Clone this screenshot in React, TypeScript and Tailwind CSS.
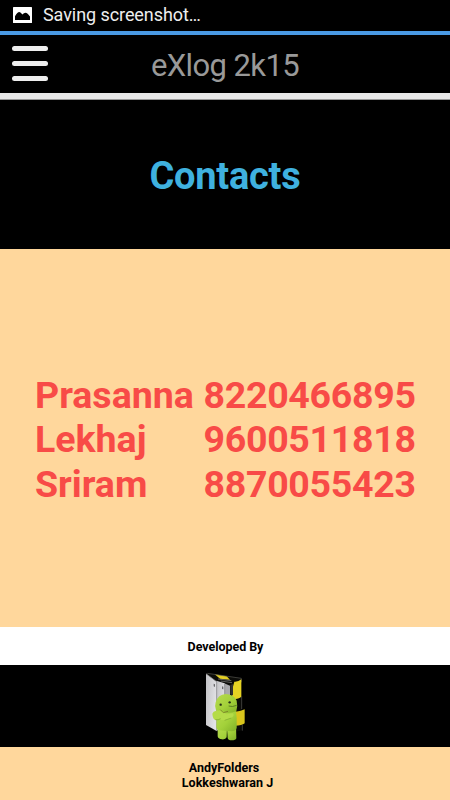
import React from "react";

type Contact = {
  name: string;
  phone: string;
};

const contacts: Contact[] = [
  { name: "Prasanna", phone: "8220466895" },
  { name: "Lekhaj", phone: "9600511818" },
  { name: "Sriram", phone: "8870055423" },
];

const PictureIcon: React.FC = () => (
  <svg className="w-[19px] h-4" viewBox="0 0 19 16">
    <rect width="19" height="16" rx="0.6" fill="#fff" />
    <path d="M2 12.9V9.2Q4.5 5 6.3 5q1.6 0 3 2.6Q11 5.8 12.5 5.8q2 0 4.5 3.8v3.3z" fill="#000" />
  </svg>
);

const FolderLogo: React.FC = () => (
  <svg className="w-[40px] h-[70px]" viewBox="45 35 120 210">
    <defs>
      <linearGradient id="paper" x1="0" x2="1" y1="0" y2="0.4">
        <stop offset="0" stopColor="#c2c2c5" />
        <stop offset="1" stopColor="#e2e2e6" />
      </linearGradient>
      <linearGradient id="body" x1="0" x2="1" y1="0" y2="1">
        <stop offset="0" stopColor="#b9dc50" />
        <stop offset="0.55" stopColor="#a3d13a" />
        <stop offset="1" stopColor="#80b028" />
      </linearGradient>
    </defs>
    {/* striped back cover */}
    <path d="M48 39l106 16 2 155-36 8-50-6z" fill="#0b0b08" />
    <path d="M74 42l36 6 10 10-30-3z" fill="#e3cf22" />
    <path d="M52 39l102 15v12" fill="none" stroke="#5c5c55" strokeWidth="2" />
    <path d="M84 56l40 5M92 62l34 5" fill="none" stroke="#8a8a86" strokeWidth="2" />
    <path d="M127 86l6-22q12 1 21-7v52q-8 8-28 7z" fill="#e6d323" />
    <path d="M135 153q14 2 29-6v42q-8 7-29 7z" fill="#d9c51c" />
    <path d="M155 108v38M157 193v18" fill="none" stroke="#5a5a55" strokeWidth="2" />
    <path d="M121 74l8-3v34l-8-3z" fill="#303030" />
    {/* paper sheets */}
    <path d="M101 68l19 8v125l-19 8z" fill="#a9a9ad" />
    <path d="M79 61l25 8 2 134-27 8z" fill="url(#paper)" />
    <path d="M104 69v120" stroke="#77777a" strokeWidth="2" />
    <path d="M48 40l32 24v148l-32-18z" fill="url(#paper)" />
    <path d="M48 40l32 24v148" fill="none" stroke="#88888b" strokeWidth="2" />
    <path d="M71 70l4 2v8l-4-2zM96 78l4 1v8l-4-1z" fill="#6a6a6c" />
    {/* android */}
    <path d="M83 196l28 4-1 31q-3 7-14 6-12-1-13-9zM111 203l27-6 1 37q-2 6-14 6-11 0-12-7z" fill="url(#body)" />
    <path d="M80 147l57 2q5 24 3 53-1 10-15 11l-36-3q-10-1-10-11z" fill="url(#body)" />
    <path d="M78 150q-5-12-1-24 7-24 30-25 24 0 33 20 4 16-1 32-29 11-61-3z" fill="url(#body)" />
    <path d="M67 160q2-7 12-9l15-1 15 12 20-3q5 7-4 13l-20 7q-10 2-17-4l-11 4q-9-2-10-19z" fill="#b5dc49" />
    <path d="M76 178q9 2 16-3M104 180l20-7" fill="none" stroke="#86b032" strokeWidth="2.5" />
    <path d="M91 148l9 9 14-4" fill="none" stroke="#7d872a" strokeWidth="3" />
    <path d="M116 137q11 4 24-2" fill="none" stroke="#4e6d1e" strokeWidth="2.5" />
    <circle cx="92" cy="133" r="3.5" fill="#26301a" />
    <circle cx="119" cy="126" r="3.5" fill="#26301a" />
  </svg>
);

const App: React.FC = () => {
  return (
    <div className="flex h-[800px] w-[450px] flex-col overflow-hidden bg-black font-[Roboto,sans-serif]">
      <div className="flex h-[31px] shrink-0 items-center gap-[11px] bg-black pl-[13px] pb-[2px] text-white">
        <PictureIcon />
        <span className="text-[18px] leading-none tracking-[-0.07px] text-[#eeeeee]">Saving screenshot…</span>
      </div>
      <div className="h-1 shrink-0 bg-[#4a9ae4]" />

      <header className="grid h-[58px] shrink-0 grid-cols-[60px_330px_60px] items-center">
        <button className="mb-[1px] ml-3 flex w-9 flex-col gap-[10px]" aria-label="Menu">
          <span className="h-[5px] w-full rounded-full bg-[#eeeeee]" />
          <span className="h-[5px] w-full rounded-full bg-[#eeeeee]" />
          <span className="h-[5px] w-full rounded-full bg-[#eeeeee]" />
        </button>
        <h1 className="pt-[3px] text-center text-[31px] leading-none tracking-[-0.6px] text-[#999999]">eXlog 2k15</h1>
      </header>
      <div className="h-[7px] shrink-0 border-b border-[#999999] bg-[#e9e9e9]" />

      <section className="flex h-[149px] shrink-0 items-center justify-center pt-[3px]">
        <h2 className="text-[38px] font-bold leading-none tracking-[-0.25px] text-[#3fb1df]">Contacts</h2>
      </section>

      <section className="h-[378px] shrink-0 bg-[#ffd79c] pt-[124px] pl-[35px]">
        {contacts.map((c) => (
          <div key={c.phone} className="flex h-[44.5px] items-center text-[37.5px] font-bold leading-none text-[#f84b47]">
            <span className="w-[168.5px]">{c.name}</span>
            <span className="tracking-[-0.3px]">{c.phone}</span>
          </div>
        ))}
      </section>

      <div className="flex h-[38px] shrink-0 items-center justify-center bg-white pt-[2px] pl-[1px] text-[12.5px] font-bold tracking-[-0.05px] text-black">
        Developed By
      </div>
      <div className="flex h-[82px] shrink-0 justify-center pt-[7px]">
        <FolderLogo />
      </div>
      <footer className="h-[53px] shrink-0 bg-[#ffd79c] pt-[13px] pl-[5px] text-center text-[12.5px] font-bold leading-[15px] text-black">
        <p className="pr-[7px]">AndyFolders</p>
        <p>Lokkeshwaran J</p>
      </footer>
    </div>
  );
};

export default App;
